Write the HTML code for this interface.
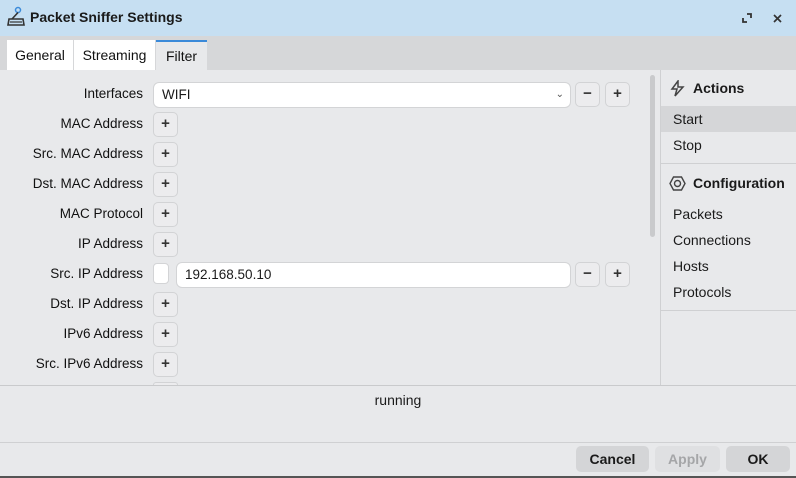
<!DOCTYPE html>
<html><head><style>
*{box-sizing:border-box;margin:0;padding:0}
body{width:796px;height:478px;overflow:hidden;font-family:"Liberation Sans",sans-serif;font-size:13.5px;color:#1a1a1a;background:#e8e9eb;position:relative}
.abs{position:absolute}
.title{left:0;top:0;width:796px;height:36px;background:#c6dff2}
.title .t{left:30px;top:9px;font-weight:bold;font-size:14px}
.tabs{left:0;top:36px;width:796px;height:34px;background:#d6d7d9}
.tab{top:4px;height:30px;background:#fff;padding-top:7px;text-align:center;font-size:14px;color:#111}
.lbl{right:653px;text-align:right;font-size:13.5px;color:#111}
.btn{width:25px;height:25px;border:1px solid #d2d3d5;border-radius:5px;background:#ececee;text-align:center;line-height:22px;font-size:15px;color:#333;font-weight:bold}
.inp{background:#fff;border:1px solid #d3d4d6;border-radius:6px;height:26px;padding-left:8px;line-height:24px}
.rp{left:660px;top:70px;width:136px;height:315px;border-left:1px solid #cfd0d2}
.ri{left:673px;font-size:14px}
.fb{top:446px;height:26px;border-radius:5px;background:#d4d5d7;text-align:center;line-height:26px;font-weight:bold;font-size:14px}
</style></head><body>
<div class="abs title">
<svg class="abs" style="left:6px;top:6px" width="20" height="22" viewBox="0 0 20 22"><circle cx="12" cy="4" r="2.5" fill="none" stroke="#3b8ad9" stroke-width="1.5"/><path d="M12 6.5 L6 13" stroke="#333" stroke-width="1.6"/><path d="M3 13 H17 L18 19 H2 Z" fill="none" stroke="#333" stroke-width="1.6"/><path d="M4 16 H16" stroke="#333" stroke-width="1.2"/></svg>
<div class="abs t">Packet Sniffer Settings</div>
<svg class="abs" style="left:742px;top:13px" width="10" height="10" viewBox="0 0 10 10"><path d="M5 1 H9 V5 M1 5 V9 H5" fill="none" stroke="#333" stroke-width="1.8"/></svg>
<svg class="abs" style="left:773px;top:14px" width="9" height="9" viewBox="0 0 9 9"><path d="M1 1 L8 8 M8 1 L1 8" stroke="#333" stroke-width="1.7"/></svg>
</div>
<div class="abs tabs">
<div class="abs tab" style="left:7px;width:66px">General</div>
<div class="abs tab" style="left:74px;width:81px">Streaming</div>
<div class="abs tab" style="left:156px;width:51px;background:#e8e9eb;border-top:2px solid #3b8ad9;padding-top:6px">Filter</div>
</div>
<div class="abs lbl" style="top:86px">Interfaces</div>
<div class="abs inp" style="left:153px;top:82px;width:418px">WIFI<span class="abs" style="right:6px;top:0;font-size:10px;color:#555">&#8964;</span></div>
<div class="abs btn" style="left:575px;top:82px">−</div>
<div class="abs btn" style="left:605px;top:82px">+</div>
<div class="abs lbl" style="top:116px">MAC Address</div><div class="abs btn" style="left:153px;top:112px">+</div>
<div class="abs lbl" style="top:146px">Src. MAC Address</div><div class="abs btn" style="left:153px;top:142px">+</div>
<div class="abs lbl" style="top:176px">Dst. MAC Address</div><div class="abs btn" style="left:153px;top:172px">+</div>
<div class="abs lbl" style="top:206px">MAC Protocol</div><div class="abs btn" style="left:153px;top:202px">+</div>
<div class="abs lbl" style="top:236px">IP Address</div><div class="abs btn" style="left:153px;top:232px">+</div>
<div class="abs lbl" style="top:266px">Src. IP Address</div>
<div class="abs" style="left:153px;top:263px;width:16px;height:21px;background:#fff;border:1px solid #d3d4d6;border-radius:4px"></div>
<div class="abs inp" style="left:176px;top:262px;width:395px">192.168.50.10</div>
<div class="abs btn" style="left:575px;top:262px">−</div>
<div class="abs btn" style="left:605px;top:262px">+</div>
<div class="abs lbl" style="top:296px">Dst. IP Address</div><div class="abs btn" style="left:153px;top:292px">+</div>
<div class="abs lbl" style="top:326px">IPv6 Address</div><div class="abs btn" style="left:153px;top:322px">+</div>
<div class="abs lbl" style="top:356px">Src. IPv6 Address</div><div class="abs btn" style="left:153px;top:352px">+</div>
<div class="abs btn" style="left:153px;top:382px;height:3px;border-bottom:none;border-radius:5px 5px 0 0"></div>
<div class="abs" style="left:650px;top:75px;width:5px;height:162px;background:#c9cacc;border-radius:3px"></div>
<div class="abs rp"></div>
<svg class="abs" style="left:669px;top:80px" width="17" height="17" viewBox="0 0 17 17"><path d="M9 1 L3 9 H8 L6 16 L14 7 H9 Z" fill="none" stroke="#444" stroke-width="1.5"/></svg>
<div class="abs" style="left:693px;top:80px;font-weight:bold;font-size:14px">Actions</div>
<div class="abs" style="left:661px;top:106px;width:135px;height:26px;background:#d5d6d8"></div>
<div class="abs ri" style="top:111px">Start</div>
<div class="abs ri" style="top:137px">Stop</div>
<div class="abs" style="left:661px;top:163px;width:135px;height:1px;background:#cfd0d2"></div>
<svg class="abs" style="left:669px;top:175px" width="17" height="17" viewBox="0 0 17 17"><path d="M4.5 2 H12.5 L16 8.5 L12.5 15 H4.5 L1 8.5 Z" fill="none" stroke="#444" stroke-width="1.4"/><circle cx="8.5" cy="8.5" r="3" fill="none" stroke="#444" stroke-width="1.4"/></svg>
<div class="abs" style="left:693px;top:175px;font-weight:bold;font-size:14px">Configuration</div>
<div class="abs ri" style="top:206px">Packets</div>
<div class="abs ri" style="top:232px">Connections</div>
<div class="abs ri" style="top:258px">Hosts</div>
<div class="abs ri" style="top:284px">Protocols</div>
<div class="abs" style="left:661px;top:310px;width:135px;height:1px;background:#cfd0d2"></div>
<div class="abs" style="left:0;top:385px;width:796px;height:1px;background:#c9cacc"></div>
<div class="abs" style="left:0;top:392px;width:796px;text-align:center;font-size:14px">running</div>
<div class="abs" style="left:0;top:442px;width:796px;height:1px;background:#cfd0d2"></div>
<div class="abs fb" style="left:576px;width:73px">Cancel</div>
<div class="abs fb" style="left:655px;width:65px;background:#dfe0e2;color:#a5a6a8">Apply</div>
<div class="abs fb" style="left:726px;width:64px">OK</div>
<div class="abs" style="left:0;top:476px;width:796px;height:2px;background:#555"></div>
</body></html>
